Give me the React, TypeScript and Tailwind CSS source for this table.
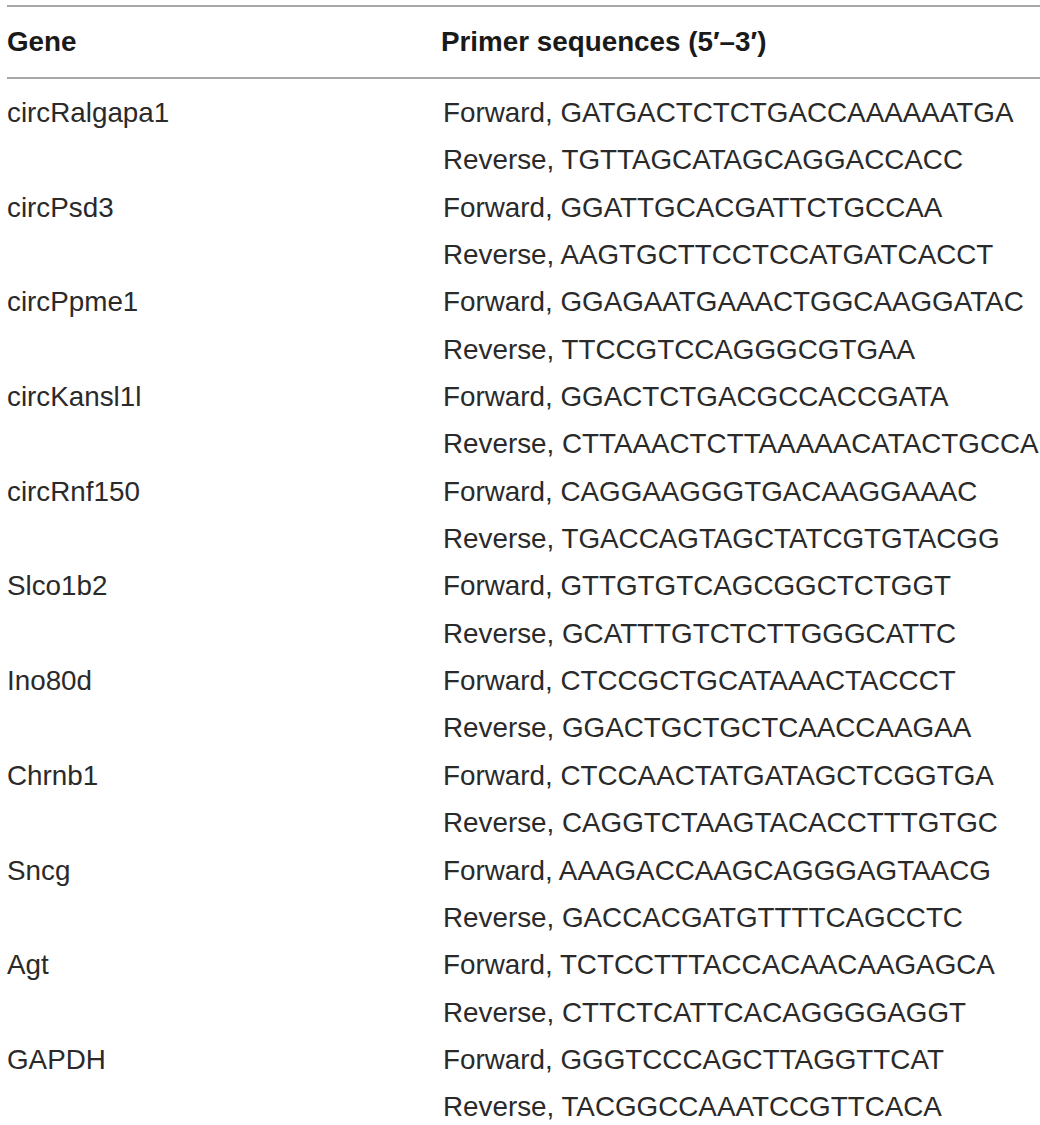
const rows: { gene: string; fwd: string; rev: string }[] = [
  { gene: "circRalgapa1", fwd: "GATGACTCTCTGACCAAAAAATGA", rev: "TGTTAGCATAGCAGGACCACC" },
  { gene: "circPsd3", fwd: "GGATTGCACGATTCTGCCAA", rev: "AAGTGCTTCCTCCATGATCACCT" },
  { gene: "circPpme1", fwd: "GGAGAATGAAACTGGCAAGGATAC", rev: "TTCCGTCCAGGGCGTGAA" },
  { gene: "circKansl1l", fwd: "GGACTCTGACGCCACCGATA", rev: "CTTAAACTCTTAAAAACATACTGCCA" },
  { gene: "circRnf150", fwd: "CAGGAAGGGTGACAAGGAAAC", rev: "TGACCAGTAGCTATCGTGTACGG" },
  { gene: "Slco1b2", fwd: "GTTGTGTCAGCGGCTCTGGT", rev: "GCATTTGTCTCTTGGGCATTC" },
  { gene: "Ino80d", fwd: "CTCCGCTGCATAAACTACCCT", rev: "GGACTGCTGCTCAACCAAGAA" },
  { gene: "Chrnb1", fwd: "CTCCAACTATGATAGCTCGGTGA", rev: "CAGGTCTAAGTACACCTTTGTGC" },
  { gene: "Sncg", fwd: "AAAGACCAAGCAGGGAGTAACG", rev: "GACCACGATGTTTTCAGCCTC" },
  { gene: "Agt", fwd: "TCTCCTTTACCACAACAAGAGCA", rev: "CTTCTCATTCACAGGGGAGGT" },
  { gene: "GAPDH", fwd: "GGGTCCCAGCTTAGGTTCAT", rev: "TACGGCCAAATCCGTTCACA" },
];

export default function App() {
  return (
    <div
      className="w-[1040px] h-[1125px] bg-white pl-[7px] pt-[5px] text-[#2a2a2a] overflow-hidden"
      style={{ fontFamily: '"Liberation Sans", Arial, sans-serif' }}
    >
      {/* top rule */}
      <div className="h-[2px] bg-[#a8a8a8]" />

      {/* header */}
      <div className="grid grid-cols-[434px_1fr] h-[70px] items-center text-[27.8px] font-bold text-[#1a1a1a]">
        <div>Gene</div>
        <div>Primer sequences (5′–3′)</div>
      </div>
      <div className="h-[2px] bg-[#a8a8a8]" />

      {/* body */}
      <div className="pt-[10px] text-[27.8px] leading-[47.35px]">
        {rows.map((r) => (
          <div key={r.gene} className="grid grid-cols-[436px_1fr]">
            <div>{r.gene}</div>
            <div className="whitespace-nowrap">
              <div>Forward, {r.fwd}</div>
              <div>Reverse, {r.rev}</div>
            </div>
          </div>
        ))}
      </div>
    </div>
  );
}
